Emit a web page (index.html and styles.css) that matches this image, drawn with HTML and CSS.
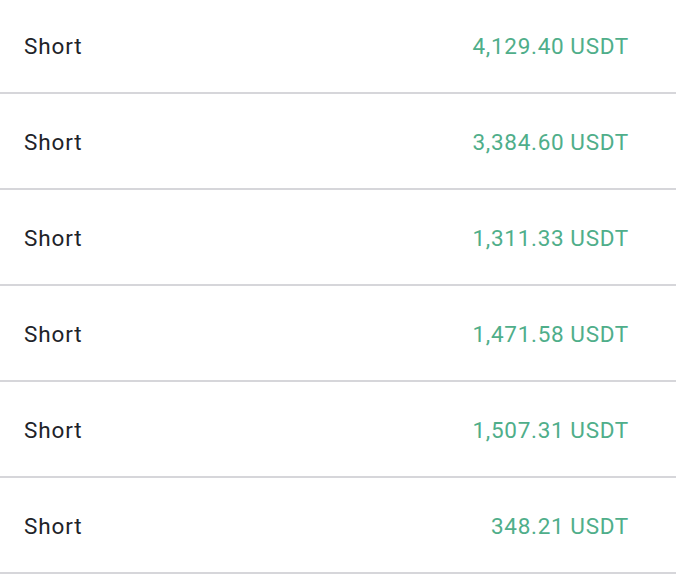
FILE: index.html
```html
<!DOCTYPE html>
<html>
<head>
<meta charset="utf-8">
<link rel="stylesheet" href="styles.css">
</head>
<body>
<div class="list">
  <div class="row"><span class="side">Short</span><span class="amount"><span class="num">4,129.40</span><span class="unit">USDT</span></span></div>
  <div class="row"><span class="side">Short</span><span class="amount"><span class="num">3,384.60</span><span class="unit">USDT</span></span></div>
  <div class="row"><span class="side">Short</span><span class="amount"><span class="num">1,311.33</span><span class="unit">USDT</span></span></div>
  <div class="row"><span class="side">Short</span><span class="amount"><span class="num">1,471.58</span><span class="unit">USDT</span></span></div>
  <div class="row"><span class="side">Short</span><span class="amount"><span class="num">1,507.31</span><span class="unit">USDT</span></span></div>
  <div class="row"><span class="side">Short</span><span class="amount"><span class="num">348.21</span><span class="unit">USDT</span></span></div>
</div>
</body>
</html>
```
FILE: styles.css
```css
html, body {
  margin: 0;
  padding: 0;
  background: #ffffff;
}
.list {
  display: flex;
  flex-direction: column;
  margin-top: -2px;
}
.row {
  height: 94px;
  box-sizing: border-box;
  padding: 1px 47px 0 24px;
  height: 96px;
  border-bottom: 2px solid #d6d6da;
  display: flex;
  align-items: center;
  justify-content: space-between;
  font-family: Roboto, "Liberation Sans", sans-serif;
  font-size: 22.5px;
  letter-spacing: 0.9px;
}
.side {
  color: #1e2329;
}
.amount {
  display: flex;
  gap: 6px;
  color: #4fae8a;
  letter-spacing: 0.7px;
}
```
